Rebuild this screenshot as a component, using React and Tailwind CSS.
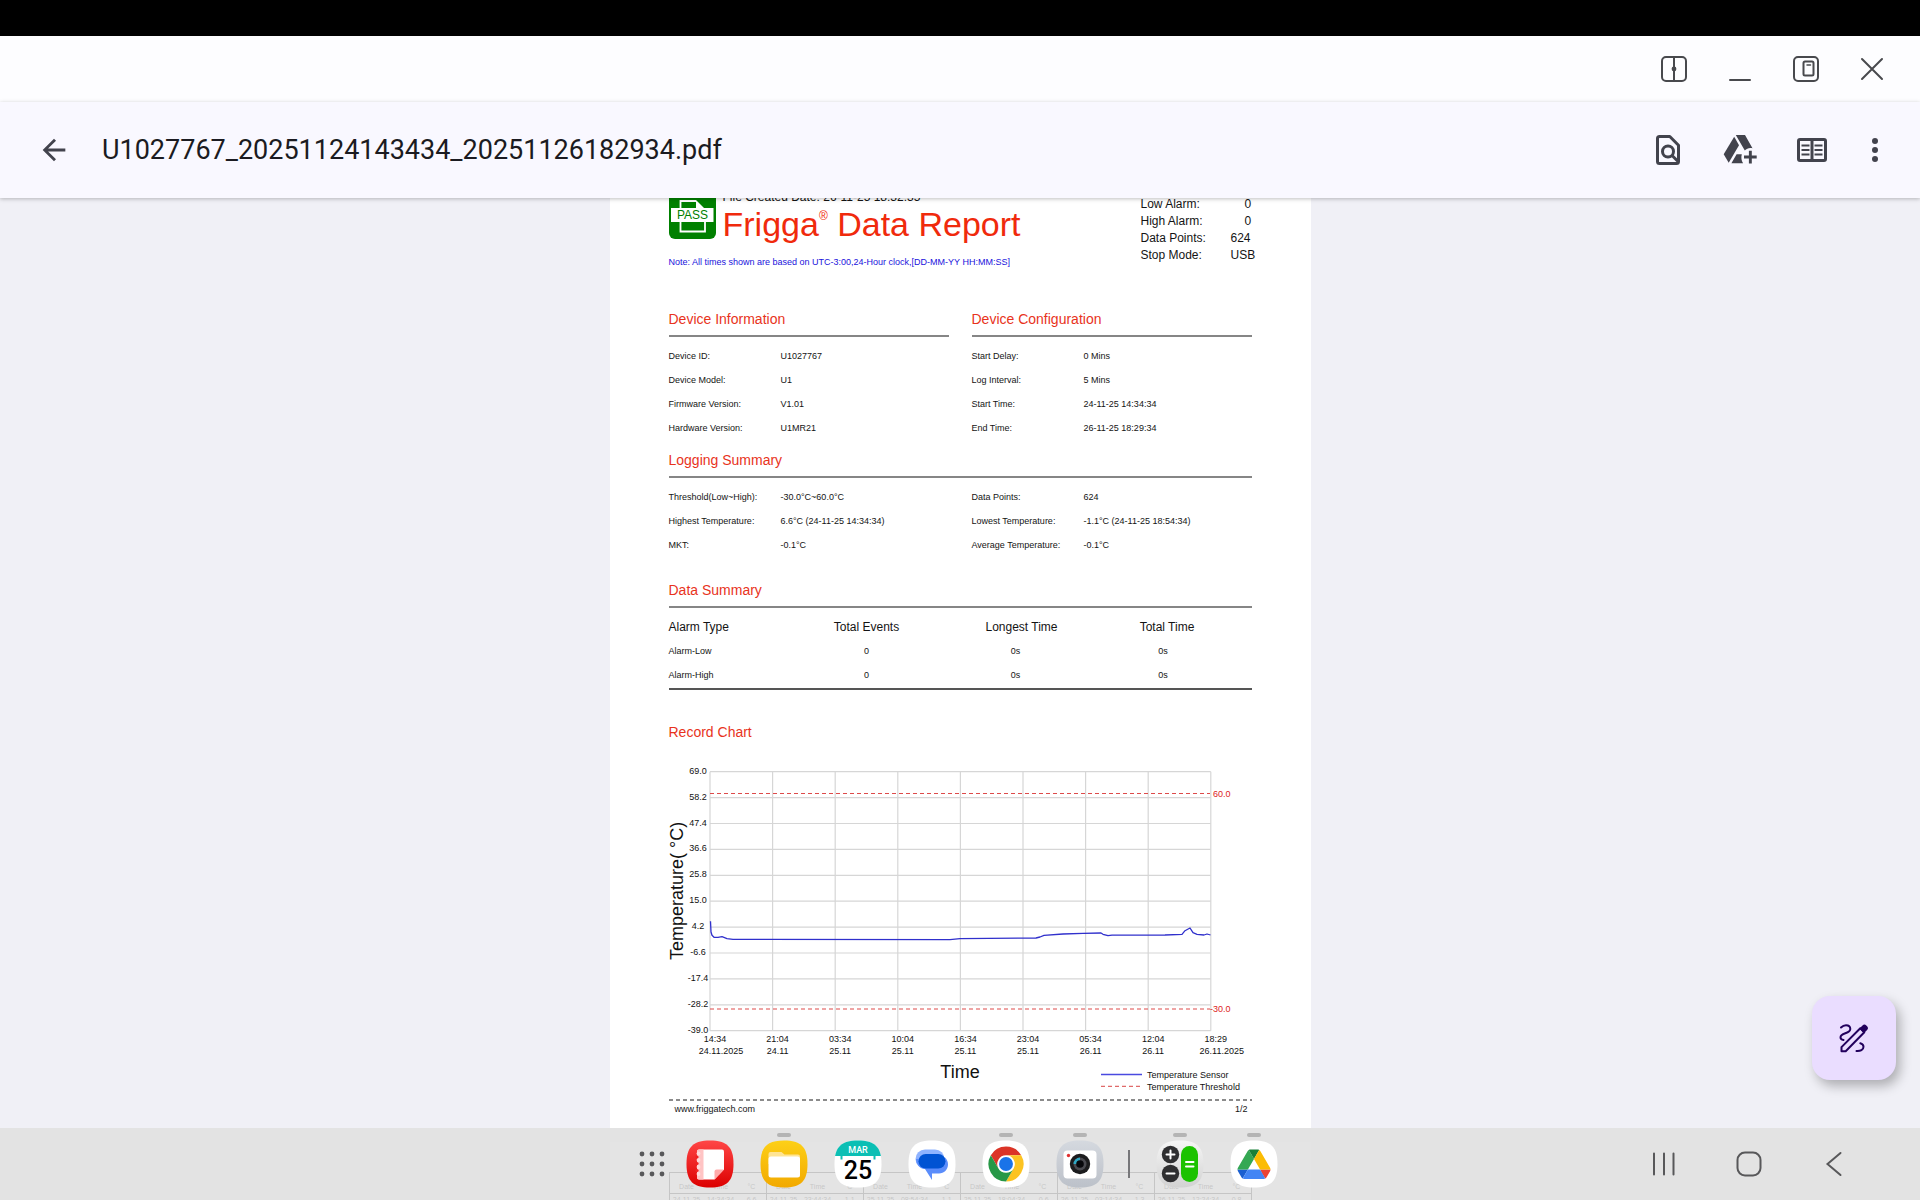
import React from "react";
import { MdArrowBack } from "react-icons/md";

const deviceInfo = [
  ["Device ID:", "U1027767"],
  ["Device Model:", "U1"],
  ["Firmware Version:", "V1.01"],
  ["Hardware Version:", "U1MR21"],
];
const deviceConfig = [
  ["Start Delay:", "0 Mins"],
  ["Log Interval:", "5 Mins"],
  ["Start Time:", "24-11-25 14:34:34"],
  ["End Time:", "26-11-25 18:29:34"],
];
const loggingLeft = [
  ["Threshold(Low~High):", "-30.0°C~60.0°C"],
  ["Highest Temperature:", "6.6°C (24-11-25 14:34:34)"],
  ["MKT:", "-0.1°C"],
];
const loggingRight = [
  ["Data Points:", "624"],
  ["Lowest Temperature:", "-1.1°C (24-11-25 18:54:34)"],
  ["Average Temperature:", "-0.1°C"],
];
const records = [
  ["24-11-25", "14:34:34", "6.6"],
  ["24-11-25", "23:44:34", "-1.1"],
  ["25-11-25", "08:54:34", "-1.1"],
  ["25-11-25", "18:04:34", "-0.6"],
  ["26-11-25", "03:14:34", "1.3"],
  ["26-11-25", "12:24:34", "0.8"],
];
const yTicks = ["69.0", "58.2", "47.4", "36.6", "25.8", "15.0", "4.2", "-6.6", "-17.4", "-28.2", "-39.0"];
const xTicks = [
  ["14:34", "24.11.2025"],
  ["21:04", "24.11"],
  ["03:34", "25.11"],
  ["10:04", "25.11"],
  ["16:34", "25.11"],
  ["23:04", "25.11"],
  ["05:34", "26.11"],
  ["12:04", "26.11"],
  ["18:29", "26.11.2025"],
];

function Pairs({ rows }) {
  return (
    <dl className="mt-[7px] text-[9px] leading-6">
      {rows.map(([k, v]) => (
        <div key={k} className="flex">
          <dt className="w-28 shrink-0 whitespace-nowrap">{k}</dt>
          <dd className="whitespace-nowrap">{v}</dd>
        </div>
      ))}
    </dl>
  );
}

function Heading({ children, ruled = true }) {
  return (
    <h2
      className={
        ruled
          ? "border-b-2 border-[#868686] pb-[6px] text-sm leading-5 text-[#e8331c]"
          : "text-sm leading-5 text-[#e8331c]"
      }
    >
      {children}
    </h2>
  );
}

function PassBadge() {
  return (
    <svg viewBox="0 0 47 47" className="mt-1 h-[47px] w-[47px] shrink-0" role="img" aria-label="Pass">
      <rect width="47" height="47" rx="6" fill="#008000" />
      <path d="M11.5 17V9h15.500M11.5 29v10.500h24.500V29" fill="none" stroke="#fff" strokeWidth="1.800" />
      <path d="M27 8l9 9h-9z" fill="#fff" />
      <rect x="2" y="16" width="42.500" height="14" fill="#fff" />
      <text x="23.500" y="27" textAnchor="middle" fontSize="12" fill="#008000">PASS</text>
    </svg>
  );
}

function RecordChart() {
  const left = 41;
  const top = 29.7;
  const dx = 62.6;
  const dy = 25.9;
  return (
    <svg viewBox="0 0 583 359" className="block w-full" role="img" aria-label="Temperature record chart">
      <g stroke="#d6d6d6" strokeWidth="1.200">
        {yTicks.map((t, i) => (
          <line key={t} x1={left} x2={541.8} y1={top + i * dy} y2={top + i * dy} />
        ))}
        {xTicks.map((t, i) => (
          <line key={t[0]} y1={top} y2={288.7} x1={left + i * dx} x2={left + i * dx} />
        ))}
      </g>
      <g stroke="#dd4a4a" strokeWidth="1.200" strokeDasharray="4 3">
        <line x1={left} x2={541} y1="51.500" y2="51.500" />
        <line x1={left} x2={541} y1="267" y2="267" />
      </g>
      <polyline
        fill="none"
        stroke="#3030cc"
        strokeWidth="1.300"
        strokeLinejoin="round"
        points="41.5,179.3 42,190 43,193.3 45,195.3 49,195.3 53,194.7 58,196.7 64,197.4 281,197.6 291,196.7 367,196 371,195 375,193.3 394,192 414,191.3 432,191 434,192.3 439,193.7 443,193.1 496,193 513,192.3 516,188.7 521,186 524,190.7 528,192.3 535,193 538,192 541.5,193"
      />
      <g fontSize="9" textAnchor="middle" fill="#111">
        {yTicks.map((t, i) => (
          <text key={t} x="29" y={top + i * dy + 2}>{t}</text>
        ))}
        {xTicks.map(([time, day], i) => (
          <React.Fragment key={time}>
            <text x={left + 5 + i * dx} y="300">{time}</text>
            <text x={left + 5 + i * dx + (day.length > 5 ? 6 : 0)} y="312">{day}</text>
          </React.Fragment>
        ))}
      </g>
      <g fontSize="9" fill="#dd2222">
        <text x="544" y="55">60.0</text>
        <text x="541" y="270">-30.0</text>
      </g>
      <g fontSize="18" textAnchor="middle" fill="#111">
        <text x="291" y="336">Time</text>
        <text transform="translate(14 149) rotate(-90)">Temperature( °C)</text>
      </g>
      <line x1="432" x2="473" y1="332.500" y2="332.500" stroke="#4a4ae0" strokeWidth="1.500" />
      <line x1="432" x2="471" y1="344.300" y2="344.300" stroke="#e06a6a" strokeWidth="1.300" strokeDasharray="4 3" />
      <g fontSize="9" fill="#111">
        <text x="478" y="336">Temperature Sensor</text>
        <text x="478" y="348">Temperature Threshold</text>
      </g>
      <line x1="0" x2="583" y1="358" y2="358" stroke="#666" strokeWidth="1.500" strokeDasharray="4 3" />
    </svg>
  );
}

function WindowBar() {
  const cls = "h-7 w-7";
  const s = { fill: "none", stroke: "#48494d", strokeWidth: 2, strokeLinecap: "round" };
  return (
    <div className="flex h-[66px] shrink-0 items-center justify-end gap-[38px] bg-[#fdfdff] pr-[34px]">
      <button aria-label="Split view">
        <svg viewBox="0 0 28 28" className={cls} {...s}>
          <rect x="2" y="2" width="24" height="24" rx="4" />
          <path d="M14 2v24" />
          <circle cx="14" cy="14" r="2.400" fill="#48494d" stroke="none" />
        </svg>
      </button>
      <button aria-label="Minimize">
        <svg viewBox="0 0 28 28" className={cls} {...s}>
          <path d="M4 25h20" />
        </svg>
      </button>
      <button aria-label="Resize window">
        <svg viewBox="0 0 28 28" className={cls} {...s}>
          <rect x="2" y="2" width="24" height="24" rx="4" />
          <rect x="11.500" y="6.500" width="10" height="14" rx="1.500" />
          <path d="M15 10h3.500" strokeWidth="1.500" />
        </svg>
      </button>
      <button aria-label="Close">
        <svg viewBox="0 0 28 28" className={cls} {...s}>
          <path d="M4 4l20 20M24 4L4 24" />
        </svg>
      </button>
    </div>
  );
}

function AppBar() {
  return (
    <header className="relative z-10 flex h-24 shrink-0 items-center bg-[#f9f8ff] pr-[27px] pl-[37px] text-[#42434d] shadow-[0_1px_4px_rgba(0,0,0,0.25)]">
      <button aria-label="Back">
        <MdArrowBack className="h-[34px] w-[34px]" />
      </button>
      <h1 className="ml-[31px] flex-1 truncate font-['Roboto',sans-serif] text-[27px] leading-9 text-[#1b1b21]">
        U1027767_20251124143434_20251126182934.pdf
      </h1>
      <div className="flex items-center gap-9">
        <button aria-label="Find in file">
          <svg viewBox="0 0 36 36" className="h-9 w-9" fill="none" stroke="currentColor" strokeWidth="3">
            <path d="M9 4.500h10.800l8.700 8.700v16.300a2 2 0 0 1-2 2H9.500a2 2 0 0 1-2-2v-23a2 2 0 0 1 2-2z" strokeLinejoin="round" />
            <circle cx="18" cy="19.500" r="5.500" />
            <path d="M21.800 23.300l7 7" />
          </svg>
        </button>
        <button aria-label="Add to Drive">
          <svg viewBox="0 0 36 36" className="h-9 w-9" fill="currentColor">
            <path d="M12.200 4.800L17 13.200 6.700 30.800 1.700 22.300z" />
            <path d="M13.800 3H23l7.500 13.200c-3.300-.8-5.700.2-7.700 2.300z" />
            <path d="M14.600 22.300h5.200c-.9 3.300-.4 6.300 1.300 9H9.400z" />
            <path d="M26.900 18.800h2.900v4.800h4.900v2.900h-4.900v4.900h-2.900v-4.900h-4.900v-2.900h4.900z" />
          </svg>
        </button>
        <button aria-label="Reading mode">
          <svg viewBox="0 0 36 36" className="h-9 w-9" fill="none" stroke="currentColor" strokeWidth="3">
            <rect x="4.500" y="7.500" width="27" height="21" rx="1.500" />
            <path d="M18 7v22" />
            <path d="M7.500 13.500h8M7.500 18h8M7.500 22.500h8M20.500 13.500h8M20.500 18h8M20.500 22.500h8" strokeWidth="2.200" />
          </svg>
        </button>
      </div>
      <button aria-label="More options" className="ml-[27px]">
        <svg viewBox="0 0 36 36" className="h-9 w-9" fill="currentColor">
          <circle cx="18" cy="9" r="3" />
          <circle cx="18" cy="18" r="3" />
          <circle cx="18" cy="27" r="3" />
        </svg>
      </button>
    </header>
  );
}

function FirstPage() {
  return (
    <article className="-mt-[60px] w-full max-w-[701px] bg-white px-[59px] pt-[50px] pb-[11px] text-[#141414]">
      <div className="flex justify-between">
        <div>
          <div className="flex gap-[7px]">
            <PassBadge />
            <div>
              <p className="text-xs leading-[18px]">File Created Date: 26-11-25 18:32:35</p>
              <p className="text-[34px] leading-9 whitespace-nowrap text-[#f02a0c]">
                Frigga<sup className="-top-4 text-[12px]">®</sup> Data Report
              </p>
            </div>
          </div>
          <p className="mt-3 text-[9px] leading-4 whitespace-nowrap text-[#1a12dc]">
            Note: All times shown are based on UTC-3:00,24-Hour clock,[DD-MM-YY HH:MM:SS]
          </p>
        </div>
        <dl className="mt-2 grid w-[111px] grid-cols-[90px_auto] content-start text-xs leading-[17px]">
          <dt>Low Alarm:</dt>
          <dd className="pl-[14px]">0</dd>
          <dt>High Alarm:</dt>
          <dd className="pl-[14px]">0</dd>
          <dt>Data Points:</dt>
          <dd>624</dd>
          <dt>Stop Mode:</dt>
          <dd>USB</dd>
        </dl>
      </div>

      <div className="mt-[39px] grid grid-cols-2 gap-x-[23px]">
        <section>
          <Heading>Device Information</Heading>
          <Pairs rows={deviceInfo} />
        </section>
        <section>
          <Heading>Device Configuration</Heading>
          <Pairs rows={deviceConfig} />
        </section>
      </div>

      <section className="mt-[10px]">
        <Heading>Logging Summary</Heading>
        <div className="grid grid-cols-2 gap-x-[23px]">
          <Pairs rows={loggingLeft} />
          <Pairs rows={loggingRight} />
        </div>
      </section>

      <section className="mt-[23px]">
        <Heading>Data Summary</Heading>
        <div className="border-b-2 border-[#555] pt-[7px] pb-px">
          <table className="w-full table-fixed text-center text-[9px] leading-6">
            <thead className="text-xs leading-6">
              <tr>
                <th className="w-[120px] text-left font-normal">Alarm Type</th>
                <th className="w-[156px] font-normal">Total Events</th>
                <th className="w-[154px] font-normal">Longest Time</th>
                <th className="pr-4 font-normal">Total Time</th>
              </tr>
            </thead>
            <tbody>
              {["Alarm-Low", "Alarm-High"].map((name) => (
                <tr key={name}>
                  <td className="text-left">{name}</td>
                  <td>0</td>
                  <td className="pr-3">0s</td>
                  <td className="pr-6">0s</td>
                </tr>
              ))}
            </tbody>
          </table>
        </div>
      </section>

      <section className="mt-8">
        <Heading ruled={false}>Record Chart</Heading>
        <RecordChart />
      </section>

      <footer className="flex justify-between pr-1 pl-[6px] text-[9px] leading-4">
        <span>www.friggatech.com</span>
        <span>1/2</span>
      </footer>
    </article>
  );
}

function SecondPage() {
  return (
    <article className="mt-[14px] w-full max-w-[701px] shrink-0 bg-white px-[59px] pt-[30px] pb-10 text-[7px] text-black">
      <div className="grid grid-cols-6 border-l border-black">
        {records.map(([date, time, temp]) => (
          <table key={date + time} className="w-full table-fixed border-collapse text-center leading-3">
            <thead>
              <tr className="border-y border-r border-black">
                <th className="h-[18px] w-[34px] pt-2 font-normal">Date</th>
                <th className="w-[34px] pt-2 font-normal">Time</th>
                <th className="pt-2 font-normal">°C</th>
              </tr>
            </thead>
            <tbody>
              <tr className="border-r border-black">
                <td className="whitespace-nowrap">{date}</td>
                <td className="whitespace-nowrap">{time}</td>
                <td>{temp}</td>
              </tr>
            </tbody>
          </table>
        ))}
      </div>
    </article>
  );
}

function DockApp({ label, running, children }) {
  return (
    <button aria-label={label} className="relative h-12 w-12">
      {running && <span className="absolute -top-[7px] left-[17px] h-1 w-[14px] rounded-full bg-[#b4b4b4]" />}
      <svg viewBox="0 0 48 48" className="h-12 w-12">
        {children}
      </svg>
    </button>
  );
}

const squircle = "M24 .5C41 .5 47.500 7 47.500 24S41 47.500 24 47.500.5 41 .5 24 7 .5 24 .5z";

function Dock() {
  return (
    <nav className="absolute inset-x-0 bottom-0 z-20 grid h-[72px] grid-cols-[1fr_auto_1fr] items-center bg-[rgba(224,224,224,0.88)] pr-1">
      <svg width="0" height="0" aria-hidden="true">
        <defs>
          <linearGradient id="noteRed" x1="0" y1="0" x2="0" y2="1">
            <stop offset="0" stopColor="#ff4646" />
            <stop offset="1" stopColor="#dc0000" />
          </linearGradient>
          <linearGradient id="fileYellow" x1="0" y1="0" x2="0" y2="1">
            <stop offset="0" stopColor="#fdd017" />
            <stop offset="1" stopColor="#f2a900" />
          </linearGradient>
          <linearGradient id="camGray" x1="0" y1="0" x2="0" y2="1">
            <stop offset="0" stopColor="#d5d9df" />
            <stop offset="1" stopColor="#bcc1c9" />
          </linearGradient>
          <linearGradient id="calcGray" x1="0" y1="0" x2="0" y2="1">
            <stop offset="0" stopColor="#f6f6f6" />
            <stop offset="1" stopColor="#d2d2d2" />
          </linearGradient>
          <clipPath id="squircleClip">
            <path d={squircle} />
          </clipPath>
        </defs>
      </svg>
      <div className="flex items-center">
        <button aria-label="All apps" className="mr-[21px]">
          <svg viewBox="0 0 26 26" className="h-[26px] w-[26px]" fill="#58585a">
            {[3, 13, 23].map((y) => [3, 13, 23].map((x) => <circle key={x + "-" + y} cx={x} cy={y} r="2.400" />))}
          </svg>
        </button>
        <div className="flex gap-[26px]">
          <DockApp label="Notes">
            <path d={squircle} fill="url(#noteRed)" />
            <path d="M13 9.500h23a2 2 0 0 1 2 2V29.500L28.500 39.500H13a2 2 0 0 1-2-2v-26a2 2 0 0 1 2-2z" fill="#fff" />
            <path d="M13 9.500h4.500v30H13a2 2 0 0 1-2-2v-26a2 2 0 0 1 2-2z" fill="#ffc4c4" />
            <path d="M28.500 39.500v-8a2 2 0 0 1 2-2H38z" fill="#ffaaaa" />
            {[13.5, 20, 27, 34].map((y) => (
              <circle key={y} cx="12.500" cy={y} r="1.900" fill="#ffdcdc" />
            ))}
            {[17, 23.5, 30.5].map((y) => (
              <circle key={y} cx="11" cy={y} r="1.600" fill="#f02424" />
            ))}
          </DockApp>
          <DockApp label="My Files" running>
            <path d={squircle} fill="url(#fileYellow)" />
            <path d="M8.500 14a2 2 0 0 1 2-2h11l3 2.500h13.500a2 2 0 0 1 2 2V24H8.500z" fill="#ffe493" />
            <rect x="8.500" y="16.500" width="31.500" height="21" rx="2.500" fill="#fff" />
          </DockApp>
          <DockApp label="Calendar">
            <path d={squircle} fill="#fff" />
            <g clipPath="url(#squircleClip)">
              <rect width="48" height="16" fill="#0bbfb4" />
            </g>
            <path d="M6.500 15h2v4.500h-2zM39.500 15h2v4.500h-2z" fill="#0bbfb4" />
            <text x="24" y="12.500" textAnchor="middle" fontSize="9" fontWeight="500" fill="#fff" className="font-['Roboto',sans-serif]">MAR</text>
            <text x="24" y="39" textAnchor="middle" fontSize="25" fontWeight="500" fill="#000" className="font-['Roboto',sans-serif]">25</text>
          </DockApp>
          <DockApp label="Messages">
            <path d={squircle} fill="#fff" />
            <rect x="7.500" y="9.500" width="29" height="19" rx="9.500" fill="#8fb3ff" />
            <path d="M8 19c0 5 4 10 9 10l7 11v-6.500h7c5 0 9-4 9-9 0-3-1-5-3-7z" fill="#5b8dfb" />
            <rect x="10.500" y="14" width="27" height="14.500" rx="7.250" fill="#0053d3" />
          </DockApp>
          <DockApp label="Chrome" running>
            <path d={squircle} fill="#fff" />
            <g transform="translate(6.500 6.500) scale(0.73)">
              <circle cx="24" cy="24" r="12" fill="#fff" />
              <path d="M24 12h20.780a23.990 23.990 0 0 0-41.560 0L13.610 30A11.990 11.990 0 0 1 24 12z" fill="#db3427" />
              <path d="M34.390 30L24 48a23.990 23.990 0 0 0 20.780-36H24a11.990 11.990 0 0 1 10.390 18z" fill="#fcc322" />
              <path d="M13.610 30L3.220 12A23.990 23.990 0 0 0 24 48l10.390-18a11.990 11.990 0 0 1-20.780 0z" fill="#279847" />
              <circle cx="24" cy="24" r="9.500" fill="#1a73e8" />
            </g>
          </DockApp>
          <DockApp label="Camera" running>
            <path d={squircle} fill="url(#camGray)" />
            <rect x="7.500" y="10.500" width="33" height="28" rx="4" fill="#fff" />
            <circle cx="12.500" cy="15.500" r="1.700" fill="#e03030" />
            <circle cx="24" cy="24" r="10.200" fill="#1c1c1e" />
            <circle cx="24" cy="24" r="6.500" fill="#4a4a50" />
            <path d="M24 24v-6.500a6.500 6.500 0 0 0-6.500 6.500z" fill="#2fa7c4" />
            <circle cx="24" cy="24" r="3.800" fill="#08080c" />
          </DockApp>
        </div>
        <span className="mr-[26px] ml-6 h-7 w-[2px] bg-[#77777a]" />
        <div className="flex gap-[26px]">
          <DockApp label="Calculator" running>
            <path d={squircle} fill="url(#calcGray)" />
            <circle cx="14.500" cy="14.500" r="8.700" fill="#2f2f31" />
            <circle cx="14.500" cy="33.500" r="8.700" fill="#2f2f31" />
            <rect x="25" y="6" width="17" height="36" rx="8.500" fill="#1bc200" />
            <path d="M10.500 14.500h8M14.500 10.500v8M10.500 33.500h8" stroke="#fff" strokeWidth="2" strokeLinecap="round" />
            <path d="M30 22h7.500M30 26.500h7.500" stroke="#fff" strokeWidth="2" strokeLinecap="round" />
          </DockApp>
          <DockApp label="Drive" running>
            <path d={squircle} fill="#fff" />
            <g transform="translate(7.500 9.500) scale(0.378)">
              <path d="m6.600 66.850 3.850 6.650c.8 1.400 1.950 2.500 3.300 3.300l13.750-23.800h-27.500c0 1.550.4 3.100 1.200 4.500z" fill="#1a5fd0" />
              <path d="m43.650 25-13.750-23.800c-1.350.8-2.500 1.900-3.300 3.300l-25.400 44a9.060 9.060 0 0 0 -1.200 4.500h27.500z" fill="#34a853" />
              <path d="m73.550 76.800c1.350-.8 2.500-1.900 3.300-3.300l1.600-2.750 7.650-13.250c.8-1.400 1.200-2.950 1.200-4.500h-27.500l5.850 11.500z" fill="#ea4335" />
              <path d="m43.650 25 13.750-23.800c-1.350-.8-2.900-1.200-4.500-1.200h-18.500c-1.600 0-3.150.45-4.500 1.200z" fill="#188038" />
              <path d="m59.800 53h-32.300l-13.750 23.800c1.350.8 2.900 1.200 4.500 1.200h50.800c1.600 0 3.150-.45 4.500-1.200z" fill="#4285f4" />
              <path d="m73.400 26.500-12.700-22c-.8-1.400-1.950-2.500-3.300-3.300l-13.750 23.800 16.150 28h27.450c0-1.550-.4-3.100-1.200-4.500z" fill="#fbbc04" />
            </g>
          </DockApp>
        </div>
      </div>
      <div className="flex justify-end gap-[57px] pr-[68px]">
        <button aria-label="Recent apps">
          <svg viewBox="0 0 28 28" className="h-7 w-7" stroke="#58585a" strokeWidth="2" strokeLinecap="round">
            <path d="M4 3.500v21M14 3.500v21M23.500 3.500v21" />
          </svg>
        </button>
        <button aria-label="Home">
          <svg viewBox="0 0 28 28" className="h-7 w-7" fill="none" stroke="#58585a" strokeWidth="2">
            <rect x="2.500" y="2.500" width="23" height="23" rx="7.500" />
          </svg>
        </button>
        <button aria-label="Go back">
          <svg viewBox="0 0 28 28" className="h-7 w-7" fill="none" stroke="#58585a" strokeWidth="2" strokeLinecap="round">
            <path d="M20.500 3L7.500 14l13 11" />
          </svg>
        </button>
      </div>
    </nav>
  );
}

export default function App() {
  return (
    <div className="relative flex h-screen flex-col overflow-hidden bg-[#f0f0f6] font-['Liberation_Sans',Arial,sans-serif]">
      <div className="h-9 shrink-0 bg-black" />
      <WindowBar />
      <AppBar />
      <main className="flex min-h-0 flex-1 flex-col items-center overflow-hidden">
        <FirstPage />
        <SecondPage />
      </main>
      <button
        aria-label="Annotate"
        className="absolute right-6 bottom-[120px] z-10 flex h-[84px] w-[84px] items-center justify-center rounded-[18px] bg-[#eaddff] shadow-[4px_6px_12px_rgba(0,0,0,0.28)]"
      >
        <svg viewBox="0 0 30 30" className="h-[30px] w-[30px]" fill="none" stroke="#22005d" strokeWidth="2" strokeLinecap="round">
          <path d="M2 4.500c1.500-1.500 3-2.300 5-2.300 2.600 0 4.300 1.600 4.300 3.800 0 5-9.800 3.500-9.800 8.300 0 1.500 1 2.500 3 2.700" />
          <path d="M17.500 28c4 .3 7-1.200 7-4.200 0-1.800-1.200-3.100-3.200-3.600" />
          <path d="M2.500 28.300v-4.200L21.300 5.300l4 4L6.700 28.300z" strokeLinejoin="round" />
          <path d="M20.500 5.500l3-3c1.200-1.200 2.600-1.200 3.800 0l.8.8c1.200 1.200 1.200 2.600 0 3.800l-3.300 3.200z" fill="#22005d" stroke="none" />
        </svg>
      </button>
      <Dock />
    </div>
  );
}
